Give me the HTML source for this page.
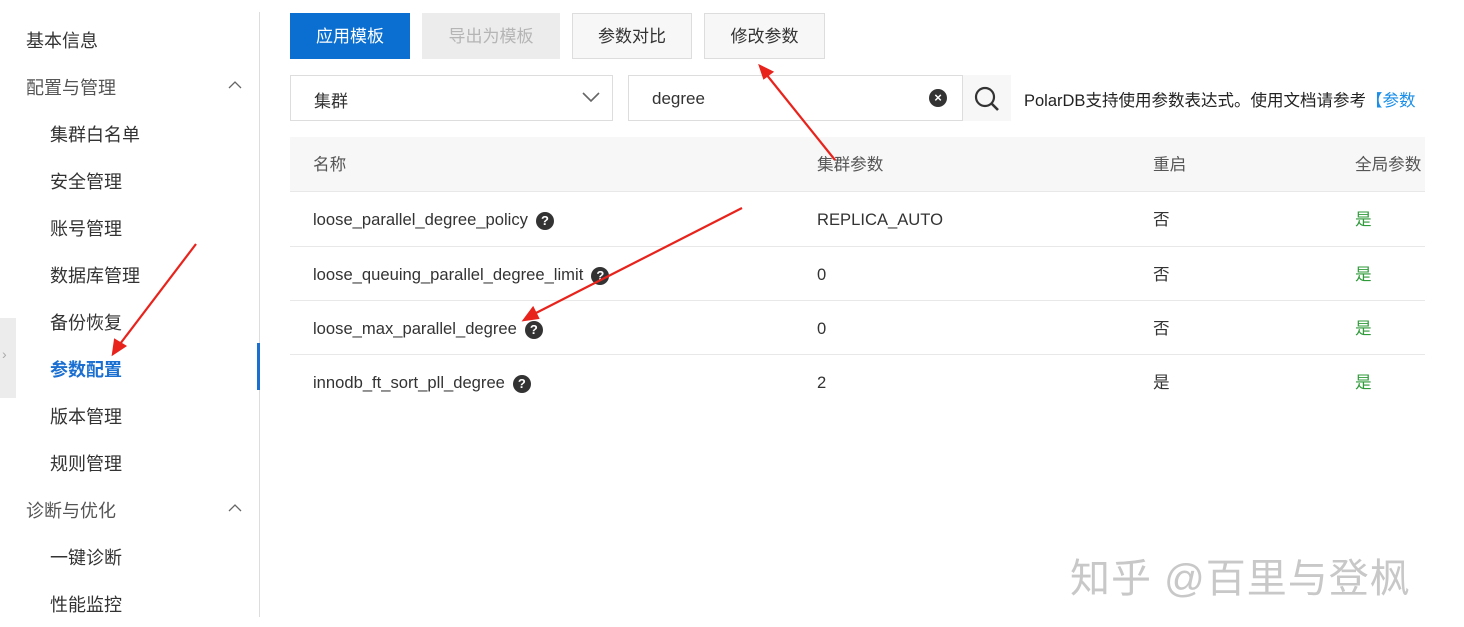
<!DOCTYPE html>
<html><head><meta charset="utf-8"><style>
*{margin:0;padding:0;box-sizing:border-box}
body{width:1464px;height:627px;background:#fff;position:relative;overflow:hidden;font-family:"Liberation Sans","Noto Sans CJK SC",sans-serif;color:#333}
.a{position:absolute;white-space:nowrap}
.nav{font-size:18px;color:#333;line-height:24px}
.btn{position:absolute;height:46px;line-height:46px;text-align:center;font-size:17px;border:1px solid #ddd;background:#f7f7f7;color:#333}
.td{position:absolute;font-size:16.6px;color:#333;line-height:20px}
.q{display:inline-block;width:18px;height:18px;border-radius:50%;background:#333;color:#fff;font-size:13px;font-weight:bold;text-align:center;line-height:18px;vertical-align:middle;margin-left:8px}
.g{color:#2f9a3a}
.row{position:absolute;left:290px;width:1135px;border-bottom:1px solid #e8e8e8}
</style></head><body>
<div class="a nav" style="left:26px;top:29px">基本信息</div>
<div class="a nav" style="left:26px;top:76px;color:#555">配置与管理</div>
<svg class="a" style="left:228px;top:80px" width="14" height="10"><path d="M1 8 L7 2 L13 8" fill="none" stroke="#666" stroke-width="1.3"/></svg>
<div class="a nav" style="left:50px;top:123px">集群白名单</div>
<div class="a nav" style="left:50px;top:170px">安全管理</div>
<div class="a nav" style="left:50px;top:217px">账号管理</div>
<div class="a nav" style="left:50px;top:264px">数据库管理</div>
<div class="a nav" style="left:50px;top:311px">备份恢复</div>
<div class="a nav" style="left:50px;top:358px;color:#1a6fd1;font-weight:bold">参数配置</div>
<div class="a nav" style="left:50px;top:405px">版本管理</div>
<div class="a nav" style="left:50px;top:452px">规则管理</div>
<div class="a nav" style="left:26px;top:499px;color:#555">诊断与优化</div>
<svg class="a" style="left:228px;top:503px" width="14" height="10"><path d="M1 8 L7 2 L13 8" fill="none" stroke="#666" stroke-width="1.3"/></svg>
<div class="a nav" style="left:50px;top:546px">一键诊断</div>
<div class="a nav" style="left:50px;top:593px">性能监控</div>
<div class="a" style="left:0;top:318px;width:16px;height:80px;background:#ececec"></div>
<div class="a" style="left:2px;top:346px;font-size:14px;color:#aaa">›</div>
<div class="a" style="left:259px;top:12px;width:1px;height:605px;background:#ddd"></div>
<div class="a" style="left:257px;top:343px;width:3px;height:47px;background:#1a6fd1"></div>

<div class="btn" style="left:290px;top:13px;width:120px;background:#0a6fd0;border-color:#0a6fd0;color:#fff">应用模板</div>
<div class="btn" style="left:422px;top:13px;width:138px;background:#ececec;border-color:#ececec;color:#b5b5b5">导出为模板</div>
<div class="btn" style="left:572px;top:13px;width:120px">参数对比</div>
<div class="btn" style="left:704px;top:13px;width:121px">修改参数</div>

<div class="a" style="left:290px;top:75px;width:323px;height:46px;border:1px solid #ddd"></div>
<div class="a" style="left:314px;top:87px;font-size:17px">集群</div>
<svg class="a" style="left:581px;top:90px" width="20" height="14"><path d="M2 3 L10 11 L18 3" fill="none" stroke="#666" stroke-width="1.6"/></svg>
<div class="a" style="left:628px;top:75px;width:383px;height:46px;border:1px solid #ddd"></div>
<div class="a" style="left:962px;top:75px;width:49px;height:46px;border-left:1px solid #ddd;background:#f7f7f7"></div>
<div class="a" style="left:652px;top:89px;font-size:17px">degree</div>
<div class="a" style="left:929px;top:89px;width:18px;height:18px;border-radius:50%;background:#333;color:#fff;font-size:13px;font-weight:bold;text-align:center;line-height:18px">×</div>
<svg class="a" style="left:973px;top:85px" width="28" height="28"><circle cx="12" cy="12" r="9" fill="none" stroke="#333" stroke-width="2.2"/><path d="M18.5 18.5 L25 25" stroke="#333" stroke-width="2.6"/></svg>
<div class="a" style="left:1024px;top:87px;font-size:16.5px;color:#222">PolarDB支持使用参数表达式。使用文档请参考<span style="color:#1a8ee8">【参数</span></div>
<div class="a" style="left:1426px;top:70px;width:40px;height:60px;background:#fff"></div>

<div class="a" style="left:290px;top:137px;width:1135px;height:55px;background:#f7f7f7;border-bottom:1px solid #e8e8e8"></div>
<div class="td" style="left:313px;top:155px;color:#555">名称</div>
<div class="td" style="left:817px;top:155px;color:#555">集群参数</div>
<div class="td" style="left:1153px;top:155px;color:#555">重启</div>
<div class="td" style="left:1355px;top:155px;color:#555">全局参数</div>

<div class="row" style="top:192px;height:55px"></div>
<div class="row" style="top:247px;height:54px"></div>
<div class="row" style="top:301px;height:54px"></div>
<div class="row" style="top:355px;height:54px;border:none"></div>
<div class="td" style="left:313px;top:210px">loose_parallel_degree_policy<span class="q">?</span></div>
<div class="td" style="left:817px;top:210px">REPLICA_AUTO</div>
<div class="td" style="left:1153px;top:210px">否</div>
<div class="td g" style="left:1355px;top:210px">是</div>
<div class="td" style="left:313px;top:265px">loose_queuing_parallel_degree_limit<span class="q">?</span></div>
<div class="td" style="left:817px;top:265px">0</div>
<div class="td" style="left:1153px;top:265px">否</div>
<div class="td g" style="left:1355px;top:265px">是</div>
<div class="td" style="left:313px;top:319px">loose_max_parallel_degree<span class="q">?</span></div>
<div class="td" style="left:817px;top:319px">0</div>
<div class="td" style="left:1153px;top:319px">否</div>
<div class="td g" style="left:1355px;top:319px">是</div>
<div class="td" style="left:313px;top:373px">innodb_ft_sort_pll_degree<span class="q">?</span></div>
<div class="td" style="left:817px;top:373px">2</div>
<div class="td" style="left:1153px;top:373px">是</div>
<div class="td g" style="left:1355px;top:373px">是</div>

<div class="a" style="left:1070px;top:546px;font-size:40px;color:#c8c8c8;letter-spacing:1px">知乎 @百里与登枫</div>

<svg class="a" style="left:0;top:0" width="1464" height="627">
<g stroke="#e8231c" stroke-width="2.2" fill="#e8231c">
<line x1="835" y1="160" x2="766" y2="74"/><polygon points="760,66 772,72 764,78" />
<line x1="742" y1="208" x2="534" y2="314"/><polygon points="524,320 533,308 538,318"/>
<line x1="196" y1="244" x2="120" y2="344"/><polygon points="113,354 115,340 125,346"/>
</g></svg>
</body></html>
